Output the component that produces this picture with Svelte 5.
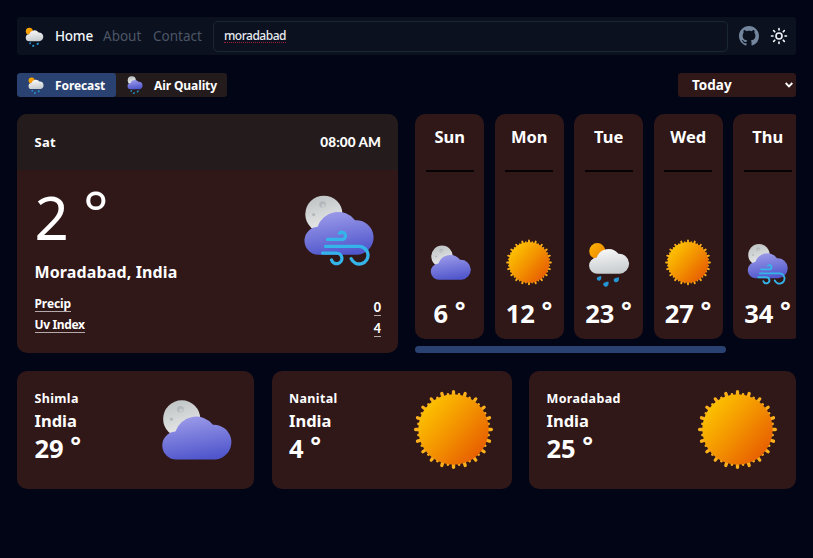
<script>
  const days = [
    { name: 'Sun', icon: 'night', temp: 6 },
    { name: 'Mon', icon: 'sun', temp: 12 },
    { name: 'Tue', icon: 'rain', temp: 23 },
    { name: 'Wed', icon: 'sun', temp: 27 },
    { name: 'Thu', icon: 'wind', temp: 34 }
  ];
  const cities = [
    { name: 'Shimla', icon: 'night', temp: 29 },
    { name: 'Nanital', icon: 'sun', temp: 4 },
    { name: 'Moradabad', icon: 'sun', temp: 25 }
  ];
  const boxes = {
    night: '-27.5 -34 250 250',
    nightrain: '-24 -5 250 250',
    wind: '-22 -26 250 250',
    rain: '-24 -3 250 250',
    sun: '-125 -122 250 250'
  };
  const rays = Array.from({ length: 20 }, (_, i) => i * 18);
  const cloud = 'M42 178A42 42 0 1 1 37 94A65 65 0 0 1 150 74A52 52 0 1 1 157 178Z';
</script>

{#snippet weather(kind)}
  <svg class="weather" viewBox={boxes[kind]} aria-hidden="true">
    {#if kind === 'sun'}
      {#each rays as a}
        <g transform="rotate({a})" stroke="#fbb01c" stroke-linecap="round">
          <path d="M0-100V-114" stroke-width="10" />
          <path d="M0-100V-107" stroke-width="8" transform="rotate(9)" />
        </g>
      {/each}
      <circle r="106" fill="url(#sunFill)" />
    {:else}
      {#if kind === 'rain'}
        <circle cx="40" cy="60" r="42" fill="url(#amber)" />
      {:else}
        <circle cx="56" cy="56" r="56" fill="url(#moon)" />
        <circle cx="52" cy="27" r="10" fill="#b1b7ba" />
        <circle cx="54" cy="31" r="6" fill="#c8cccd" />
        <circle cx="25" cy="57" r="5" fill="#b4babc" />
      {/if}
      <path d={cloud} fill={kind === 'rain' ? 'url(#whiteCloud)' : 'url(#blueCloud)'} />
      {#if kind === 'rain' || kind === 'nightrain'}
        <g fill="#2496d3">
          <path d="M60 190Q64 207 53 213A11 11 0 0 1 38 199Q42 193 60 190Z" />
          <path d="M98 219Q102 238 90 244A13 13 0 0 1 72 228Q77 222 98 219Z" />
          <path d="M152 196Q156 215 144 221A13 13 0 0 1 126 205Q131 199 152 196Z" />
        </g>
      {/if}
      {#if kind === 'wind'}
        <g fill="none" stroke="#35b4e9" stroke-width="10" stroke-linecap="round">
          <path d="M67 132H108A11 11 0 1 0 103 113" />
          <path d="M61 153H161A26.500 26.500 0 1 1 138 190" />
          <path d="M52 173H93A16 16 0 1 1 79 194" />
        </g>
      {/if}
    {/if}
  </svg>
{/snippet}

<svg class="defs" width="0" height="0" aria-hidden="true">
  <defs>
    <linearGradient id="sunFill" x1="0.1" y1="0.15" x2="0.9" y2="0.85">
      <stop offset="0" stop-color="#fdc300" />
      <stop offset="0.5" stop-color="#f39200" />
      <stop offset="1" stop-color="#e75d00" />
    </linearGradient>
    <linearGradient id="amber" x1="0" y1="0" x2="1" y2="1">
      <stop offset="0" stop-color="#fbb604" />
      <stop offset="1" stop-color="#f08200" />
    </linearGradient>
    <linearGradient id="moon" x1="0.3" y1="0" x2="0.6" y2="1">
      <stop offset="0" stop-color="#bec3c4" />
      <stop offset="1" stop-color="#eeeeee" />
    </linearGradient>
    <linearGradient id="blueCloud" x1="0.35" y1="0" x2="0.6" y2="1">
      <stop offset="0" stop-color="#9b9ae9" />
      <stop offset="1" stop-color="#4f55cb" />
    </linearGradient>
    <linearGradient id="whiteCloud" x1="0.4" y1="0" x2="0.6" y2="1">
      <stop offset="0" stop-color="#f7f7f7" />
      <stop offset="1" stop-color="#c6cbce" />
    </linearGradient>
  </defs>
</svg>

<main>
  <nav>
    <span class="logo">{@render weather('rain')}</span>
    <a class="home" href="#home">Home</a>
    <a class="about" href="#about">About</a>
    <a class="contact" href="#contact">Contact</a>
    <div class="search"><span>moradabad</span></div>
    <svg class="github" viewBox="0 0 16 16" aria-label="GitHub">
      <path fill="#73869e" d="M8 0C3.580 0 0 3.580 0 8c0 3.540 2.290 6.530 5.470 7.590.4.070.550-.170.550-.380 0-.190-.010-.820-.010-1.490-2.010.370-2.530-.490-2.690-.940-.090-.230-.480-.940-.820-1.130-.280-.150-.680-.520-.010-.530.630-.010 1.080.580 1.230.820.720 1.210 1.870.870 2.330.660.070-.520.280-.870.510-1.070-1.780-.2-3.640-.890-3.640-3.950 0-.870.310-1.590.820-2.150-.080-.2-.360-1.020.080-2.120 0 0 .670-.210 2.200.820.640-.180 1.320-.270 2-.270s1.360.090 2 .270c1.530-1.040 2.200-.820 2.200-.820.440 1.100.160 1.920.080 2.120.510.560.820 1.270.820 2.150 0 3.070-1.870 3.750-3.650 3.950.290.250.540.730.540 1.480 0 1.070-.010 1.930-.010 2.200 0 .210.150.460.550.380A8.010 8.010 0 0 0 16 8c0-4.420-3.580-8-8-8z" />
    </svg>
    <svg class="theme" viewBox="0 0 24 24" fill="none" stroke="#f1f5f9" stroke-width="2.200" stroke-linecap="round" aria-label="Theme">
      <circle cx="12" cy="12" r="4" />
      <path d="M12 2v2M12 20v2M4.930 4.930l1.410 1.410M17.660 17.660l1.410 1.410M2 12h2M20 12h2M6.340 17.660l-1.410 1.410M19.070 4.930l-1.410 1.410" />
    </svg>
  </nav>

  <div class="bar">
    <div class="tabs">
      <button class="tab active"><span class="tabicon">{@render weather('rain')}</span><span class="forecast">Forecast</span></button>
      <button class="tab"><span class="tabicon">{@render weather('nightrain')}</span><span class="air">Air Quality</span></button>
    </div>
    <button class="select">
      <span>Today</span>
      <svg width="8" height="6" viewBox="0 0 8 6" fill="none" stroke="#fff" stroke-width="1.800"><path d="M0.700 1L4 4.400L7.300 1" /></svg>
    </button>
  </div>

  <div class="middle">
    <section class="today">
      <header><span class="sat">Sat</span><span class="time">08:00 AM</span></header>
      <div class="body">
        <div class="left">
          <div class="big">2 <span class="deg">°</span></div>
          <div class="place">Moradabad, India</div>
          <div class="stat"><span class="precip">Precip</span></div>
          <div class="stat"><span class="uv">Uv Index</span></div>
        </div>
        <div class="right">
          {@render weather('wind')}
          <div class="vals"><div><span>0</span></div><div><span>4</span></div></div>
        </div>
      </div>
    </section>

    <section class="week">
      <div class="days">
        {#each days as d}
          <article class="day">
            <h3>{d.name}</h3>
            <hr />
            {@render weather(d.icon)}
            <p class="temp">{d.temp} <span class="deg">°</span></p>
          </article>
        {/each}
      </div>
      <div class="thumb"></div>
    </section>
  </div>

  <div class="cities">
    {#each cities as c}
      <article class="city">
        <div>
          <p class="name">{c.name}</p>
          <p class="country">India</p>
          <p class="temp">{c.temp} <span class="deg">°</span></p>
        </div>
        {@render weather(c.icon)}
      </article>
    {/each}
  </div>
</main>

<style>
  :global(body) { margin: 0; background: #010516; overflow: hidden; }
  main { height: 558px; box-sizing: border-box; padding: 17px 17px 0; color: #fff; font-family: 'Noto Sans', sans-serif; font-weight: 700; white-space: nowrap; }
  .defs { position: absolute; }
  svg { display: block; flex: none; }
  p, h3 { margin: 0; }
  button { border: 0; margin: 0; color: inherit; font: inherit; }
  .weather { width: 100%; aspect-ratio: 1; }

  nav { display: flex; align-items: center; height: 38px; box-sizing: border-box; padding: 0 8px 0 7px; background: #0b111f; border-radius: 3px; }
  .logo { width: 21px; margin-right: 10px; }
  nav a { color: #4c5666; text-decoration: none; font-weight: 400; font-size: 13.500px; line-height: 20px; padding-bottom: 0; }
  nav a.home { color: #f1f5f9; font-weight: 500; width: 48px; letter-spacing: -0.250px; }
  .about { width: 50px; }
  .contact { width: 60px; }
  .search { flex: 1; display: flex; align-items: center; height: 31px; box-sizing: border-box; border: 1px solid #1b2635; border-radius: 5px; padding-left: 10px; font-size: 12px; font-weight: 500; letter-spacing: -0.500px; color: #e8ebf0; }
  .search span { line-height: 12px; border-bottom: 1px dotted #a51d3a; }
  .github { width: 20px; height: 20px; margin: 0 11px; }
  .theme { width: 18px; height: 18px; }

  .bar { display: flex; justify-content: space-between; margin-top: 18px; height: 24px; }
  .tabs { display: flex; border-radius: 3px; overflow: hidden; background: #241c1c; }
  .tab { display: flex; align-items: center; background: none; padding: 0 0 0 10px; width: 111px; font-size: 12px; letter-spacing: -0.100px; }
  .tab.active { width: 99px; background: #2a4271; border-radius: 3px; }
  .tabicon { width: 18px; margin-right: 10px; }
  .select { width: 118px; display: flex; align-items: center; justify-content: space-between; background: #301718; border-radius: 3px; padding: 0 3px 0 14px; font-size: 13.500px; }

  .middle { display: flex; gap: 17px; margin-top: 17px; height: 239px; }
  .today { width: 381px; background: #301718; border-radius: 10px; overflow: hidden; }
  .today header { height: 55.500px; display: flex; justify-content: space-between; align-items: center; padding: 0 17px; background: #241c1c; font-size: 13px; }
  .sat { letter-spacing: 0.300px; padding-left: 0.500px; }
  .time, .vals { font-family: Lato, sans-serif; font-weight: 900; }
  .time { font-size: 13.500px; letter-spacing: 0.100px; }
  .body { display: flex; justify-content: space-between; padding: 17px 17px 0; }
  .left { padding-left: 0.500px; }
  .deg { position: relative; top: -0.080em; }
  .big { font-size: 60px; font-weight: 400; line-height: 60px; letter-spacing: -0.700px; }
  .place { font-size: 16px; line-height: 24px; margin: 13px 0 12px; letter-spacing: 0.130px; }
  .stat { height: 21px; font-size: 12px; line-height: 15px; }
  .precip { letter-spacing: -0.100px; }
  .uv { letter-spacing: -0.350px; }
  .stat span, .vals span { display: inline-block; border-bottom: 1.500px solid #b5aaaa; }
  .right { display: flex; flex-direction: column; align-items: flex-end; }
  .right .weather { width: 83px; height: 83px; }
  .vals { margin-top: 30px; font-size: 12.500px; line-height: 15px; text-align: right; }
  .vals div { height: 21px; }

  .week { width: 381px; overflow: hidden; }
  .days { display: flex; gap: 10.500px; height: 225px; }
  .day { flex: none; width: 69px; background: #301718; border-radius: 10px; text-align: center; }
  h3 { font-size: 16.500px; line-height: 24px; margin-top: 11px; padding-left: 0.500px; }
  hr { border: 0; height: 2px; background: #070304; margin: 20.500px 10.500px 0; }
  .day .weather { width: 48px; height: 48px; margin: 67.500px auto 0; }
  .day .temp { margin-top: 12px; }
  .temp { font-size: 25.500px; line-height: 28px; }
  .day .temp .deg { top: -0.100em; }
  .thumb { width: 311px; height: 7px; margin-top: 7px; border-radius: 4px; background: #2a4271; }

  .cities { display: flex; gap: 17.500px; margin-top: 18px; height: 117.500px; }
  .city { display: flex; justify-content: space-between; box-sizing: border-box; padding: 17.500px 17px 0 17.500px; background: #301718; border-radius: 10px; width: 237px; }
  .city:nth-child(2) { width: 240px; }
  .city:nth-child(3) { width: 267px; }
  .city .weather { width: 83px; height: 83px; }
  .name { font-size: 12.500px; line-height: 20px; letter-spacing: 0.350px; }
  .country { font-size: 16.500px; line-height: 24px; }
  .city .temp { line-height: 31px; }
</style>
